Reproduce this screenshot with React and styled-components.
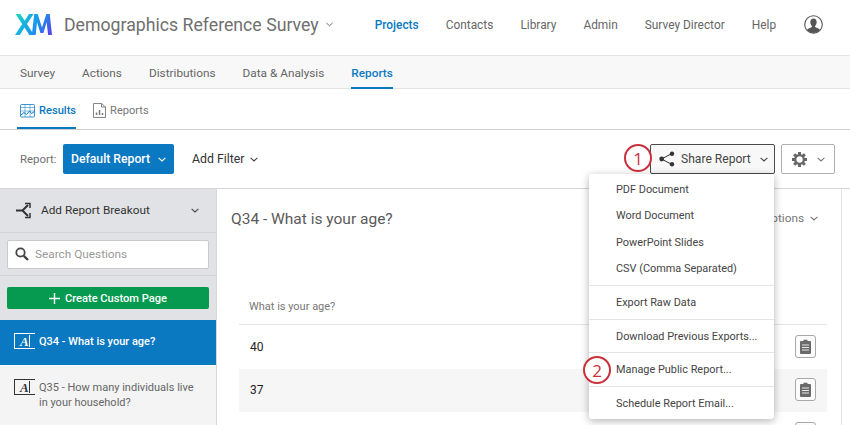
import React from "react";
import styled, { createGlobalStyle } from "styled-components";

const Global = createGlobalStyle`
  html, body { margin: 0; padding: 0; background: #fff; }
  * { box-sizing: border-box; }
  body { font-family: Roboto, "Liberation Sans", sans-serif; }
`;
const Page = styled.div`
  width: 850px; height: 425px; overflow: hidden; display: flex; flex-direction: column; color: #525252; position: relative;
`;
const Header = styled.header`
  height: 56px; flex: none; display: flex; align-items: center; padding: 0 0 6px 15px; border-bottom: 1px solid #e4e4e4;
`;
const Title = styled.div`
  margin-left: 12px; margin-right: 7px; font-size: 17.7px; color: #6f6f6f; white-space: nowrap;
`;
const Nav = styled.nav`
  display: flex; gap: 27px; margin-left: 42px; align-items: center; margin-top: 1px;
`;
const NavLink = styled.a`
  font-size: 11.9px; white-space: nowrap; color: ${p => (p.$active ? "#0b78c2" : "#666")}; font-weight: ${p => (p.$active ? 500 : 400)};
`;
const Caret = styled.svg`
  width: ${p => p.$w || 8}px; height: 5px; flex: none; fill: none; stroke: ${p => p.$c || "#666"}; stroke-width: 1.1;
`;
const SubNav = styled.div`
  height: 33px; flex: none; display: flex; gap: 27px; padding-left: 20px; background: #f8f8f8; border-bottom: 1px solid #e2e2e2;
`;
const SubLink = styled.a`
  font-size: 11.8px; line-height: 34px; height: 33px; white-space: nowrap; color: ${p => (p.$active ? "#0b78c2" : "#666")}; font-weight: ${p => (p.$active ? 500 : 400)};
  border-bottom: ${p => (p.$active ? "2px solid #0b78c2" : "none")};
`;
const Tabs = styled.div`
  height: 41px; flex: none; display: flex; padding-left: 17px; gap: 14px; border-bottom: 1px solid #cfcfcf;
`;
const Tab = styled.a`
  height: 40px; display: flex; align-items: center; gap: 4px; padding: 5px 0 0 3px; font-size: 11.1px; white-space: nowrap;
  color: ${p => (p.$active ? "#0b78c2" : "#777")}; font-weight: ${p => (p.$active ? 500 : 400)};
  border-bottom: 2px solid ${p => (p.$active ? "#0b78c2" : "transparent")};
`;
const Toolbar = styled.div`
  height: 59px; flex: none; display: flex; align-items: center; padding: 0 15px 0 20px; border-bottom: 1px solid #d4d4d4;
`;
const ReportLabel = styled.span`
  font-size: 11.4px; color: #707070; width: 43px;
`;
const PrimaryButton = styled.button`
  width: 111px; height: 30px; border: 0; border-radius: 2px; background: #0b78c2; color: #fff; font: inherit; font-size: 12.2px; font-weight: 500;
  display: flex; align-items: center; justify-content: center; gap: 8px; padding: 0;
`;
const FilterButton = styled.button`
  margin-left: 18px; border: 0; background: none; color: #333; font: inherit; font-size: 12.3px; display: flex; align-items: center; gap: 6px; padding: 0; white-space: nowrap;
`;
const Spacer = styled.div`flex: 1;`;
const ShareWrap = styled.div`position: relative;`;
const ShareButton = styled.button`
  width: 125px; height: 30px; border: 1px solid #4a4a4a; border-radius: 2px; background: #f8f8f8; color: #444; font: inherit; font-size: 12.1px;
  display: flex; align-items: center; gap: 6px; padding: 0 6px 0 8px; white-space: nowrap;
  svg:last-child { margin-left: auto; }
`;
const GearButton = styled.button`
  margin-left: 6px; width: 54px; height: 30px; border: 1px solid #b0b0b0; border-radius: 2px; background: #fff; color: #666;
  display: flex; align-items: center; justify-content: space-between; padding: 0 9px 0 10px;
`;
const Menu = styled.div`
  position: absolute; top: 30px; right: 1px; width: 185px; height: 245px; background: #fff; border-radius: 3px; z-index: 3;
  box-shadow: 0 2px 9px rgba(0,0,0,.3); display: flex; flex-direction: column; padding-top: 2px;
`;
const MenuGroup = styled.div`
  padding-bottom: ${p => p.$pb || 0}px; & + & { border-top: 1px solid #e4e4e4; }
`;
const MenuItem = styled.div`
  height: ${p => p.$h || 33}px; display: flex; align-items: center; padding-left: 27px; font-size: 10.9px; color: #444; white-space: nowrap;
`;
const Badge = styled.div`
  position: absolute; width: 28px; height: 28px; border-radius: 50%; border: 2.5px solid #c9303a; background: #fff; color: #c9303a; z-index: 4;
  display: flex; align-items: center; justify-content: center; font-size: 17px; font-family: "Open Sans", sans-serif;
`;
const ShareBadge = styled(Badge)` left: -26px; top: 0px; `;
const ManageBadge = styled(Badge)` left: -6px; top: 182px; `;
const Body = styled.div`flex: 1; display: flex; min-height: 0;`;
const Sidebar = styled.aside`
  width: 217px; flex: none; background: #e1e2e5; border-right: 1px solid #d8d8d8; display: flex; flex-direction: column;
`;
const Breakout = styled.div`
  height: 44px; flex: none; display: flex; align-items: center; padding: 0 17px 1px 16px; gap: 8px; border-bottom: 1px solid #d2d2d2; font-size: 11.8px; color: #333; white-space: nowrap;
  svg:last-child { margin-left: auto; }
`;
const SearchRow = styled.div`
  height: 43px; flex: none; padding: 7px 7px 0 7px; border-bottom: 1px solid #d2d2d2;
`;
const SearchBox = styled.div`
  height: 29px; background: #fff; border: 1px solid #c9c9c9; border-radius: 2px; display: flex; align-items: center; gap: 6px; padding: 0 0 1px 7px; font-size: 11.8px; color: #999; white-space: nowrap;
`;
const CreateRow = styled.div`height: 44px; flex: none; padding: 11px 7px 0 7px;`;
const CreateButton = styled.button`
  width: 202px; height: 22px; border: 0; border-radius: 2px; background: #059a4f; color: #fff; font: inherit; font-size: 11.1px; font-weight: 500;
  display: flex; align-items: center; justify-content: center; gap: 5px; padding: 0;
`;
const QuestionRow = styled.div`
  height: ${p => (p.$active ? 45 : 60)}px; flex: none; display: flex; gap: 4px; padding: 14px 14px 0;
  background: ${p => (p.$active ? "#0b78c2" : "#f4f4f4")}; color: ${p => (p.$active ? "#fff" : "#666")}; font-size: 11px; line-height: 15px; font-weight: ${p => (p.$active ? 500 : 400)};
  & + & { border-top: 1px solid #fff; }
`;
const TypeIcon = styled.span`
  flex: none; width: 21px; height: 16px; margin-top: -1px; border: 1px solid currentColor; border-right: 0; position: relative;
  font: italic bold 13px/15px "Liberation Serif", serif; padding-left: 5px; color: ${p => (p.$active ? "#fff" : "#333")};
  &::after { content: ""; position: absolute; right: 5px; top: 1px; bottom: 1px; width: 1px; background: currentColor; }
`;
const Main = styled.main`
  flex: 1; min-width: 0; display: flex; flex-direction: column; padding: 0 0 0 14px; position: relative;
`;
const MainInner = styled.div`
  width: 611px; height: 100%; border-right: 1px solid #e2e2e2; display: flex; flex-direction: column;
`;
const QHead = styled.div`
  height: 109px; flex: none; display: flex; justify-content: space-between; padding-top: 20px;
`;
const QTitle = styled.h2`
  margin: 0; font-size: 15.5px; line-height: 21px; font-weight: 400; color: #5a5a5a;
`;
const Options = styled.div`
  display: flex; align-items: center; gap: 6px; height: 18px; margin: 0 23px 0 0; font-size: 11.8px; color: #777;
`;
const Table = styled.div`margin-left: 8px; width: 588px; display: flex; flex-direction: column;`;
const TableHead = styled.div`
  height: 27px; padding: 2px 0 0 10px; font-size: 11px; color: #777; border-bottom: 1px solid #e4e4e4;
`;
const Row = styled.div`
  height: 43.5px; flex: none; display: flex; align-items: center; padding: 0 11px 0 11px; font-size: 12px; color: #222;
  background: ${p => (p.$alt ? "#f6f6f6" : "#fff")};
`;
const ClipButton = styled.button`
  margin: -1px 0 0 auto; width: 21px; height: 23px; border: 1px solid #a9a9a9; border-radius: 3px; background: #fbfbfb; padding: 0; display: flex; align-items: center; justify-content: center;
`;
const AvatarSlot = styled.div`margin-left: 28px; margin-top: -1px; display: flex;`;

const Chevron = ({ c, w }) => (
  <Caret viewBox="0 0 8 5" $c={c} $w={w}><path d="M.6.8 4 4 7.4.8" /></Caret>
);
const Logo = () => (
  <svg width="37" height="21" viewBox="0 0 37 21">
    <defs>
      <linearGradient id="xm" gradientUnits="userSpaceOnUse" x1="0" y1="0" x2="36" y2="21">
        <stop offset="0" stopColor="#1fdcae" />
        <stop offset=".3" stopColor="#16b4e0" />
        <stop offset=".62" stopColor="#1c8ff0" />
        <stop offset="1" stopColor="#5a3fe6" />
      </linearGradient>
    </defs>
    <path d="M.6 0h4.700l4.400 6.800L14 0h4.500l-6.500 10.100L19 21h-4.700l-4.800-7.500L4.800 21H0l7.200-10.900z" fill="url(#xm)" />
    <path d="M16.800 21 19.200 0h3.500L27 13.400 31.300 0h3.400L37 21h-3.900l-1.500-12.800L28.400 19h-3L22 8.200 20.700 21z" fill="url(#xm)" />
  </svg>
);
const Avatar = () => (
  <AvatarSlot>
    <svg width="19" height="19" viewBox="0 0 19 19">
      <circle cx="9.500" cy="9.500" r="8.800" fill="#fff" stroke="#555" strokeWidth="1.100" />
      <path d="M9.500 3.500c2 0 3.200 1.500 3.200 3.600 0 1.700-.8 3.100-1.600 3.800v1.200l3.700 1.600c.6.300 1 .6 1.200 1a8.200 8.200 0 0 1-13 0c.2-.4.600-.7 1.200-1l3.700-1.600v-1.200c-.8-.7-1.600-2.100-1.600-3.800 0-2.100 1.200-3.600 3.200-3.600z" fill="#555" />
    </svg>
  </AvatarSlot>
);
const ResultsIcon = () => (
  <svg width="15" height="14" viewBox="0 0 15 14" fill="none" stroke="#0b78c2" strokeWidth=".8">
    <rect x=".5" y=".5" width="14" height="12.500" rx="1" />
    <path d="M.5 3.500h14M5 .5v12.500M10 .5v12.500M.5 7h14" strokeWidth=".5" />
    <path d="M.5 11.500 4 8.500l2.500 2 3-3.500 2 2.500 3-2" strokeWidth="1" />
  </svg>
);
const ReportsIcon = () => (
  <svg width="13" height="15" viewBox="0 0 13 15" fill="none" stroke="#777" strokeWidth=".9">
    <path d="M.5.500h8l4 3.500v10.500H.5zM8.500.500V4h4" />
    <path d="M3.500 12V9.500M6.500 12V7M9.500 12v-2" strokeWidth="1.500" />
  </svg>
);
const ShareIcon = () => (
  <svg width="16" height="16" viewBox="0 0 16 16" fill="#333" stroke="#333">
    <path d="M2.500 8 13 2.500M2.500 8 13 13.500" strokeWidth="1" fill="none" />
    <circle cx="2.700" cy="8" r="2.400" stroke="none" />
    <circle cx="13" cy="2.700" r="2.200" stroke="none" />
    <circle cx="13" cy="13.300" r="2.200" stroke="none" />
  </svg>
);
const BreakoutIcon = () => (
  <svg width="17" height="17" viewBox="0 0 17 17" fill="none" stroke="#333" strokeWidth="2">
    <path d="M0 8.500h6.500L12 3M6.500 8.500 12 14" />
    <path d="M9 1.500h5v4.500M9 15.500h5V11" strokeWidth="1.500" />
  </svg>
);
const GearIcon = () => (
  <svg width="15" height="15" viewBox="0 0 15 15" fill="#666">
    <circle cx="7.500" cy="7.500" r="4.300" fill="none" stroke="#666" strokeWidth="2.200" />
    {[0, 45, 90, 135, 180, 225, 270, 315].map(a => (
      <rect key={a} x="6" y="0" width="3" height="3" transform={`rotate(${a} 7.500 7.500)`} />
    ))}
  </svg>
);
const SearchIcon = () => (
  <svg width="14" height="14" viewBox="0 0 14 14" fill="none" stroke="#444">
    <circle cx="5.500" cy="5.500" r="4.200" strokeWidth="1.800" />
    <path d="M8.800 8.800 13 13" strokeWidth="2.400" />
  </svg>
);
const ClipIcon = () => (
  <svg width="11" height="15" viewBox="0 0 11 15">
    <path d="M1 2h2.500V.800h4V2H10a1 1 0 0 1 1 1v11a1 1 0 0 1-1 1H1a1 1 0 0 1-1-1V3a1 1 0 0 1 1-1z" fill="#6a6a6a" />
    <path d="M2 6h7M2 8.500h7M2 11h7" stroke="#e8e8e8" strokeWidth="1" />
  </svg>
);
const PlusIcon = () => (
  <svg width="11" height="11" viewBox="0 0 11 11" stroke="#fff" strokeWidth="1.400"><path d="M5.500 0v11M0 5.500h11" /></svg>
);

const navItems = ["Contacts", "Library", "Admin", "Survey Director", "Help"];
const subItems = ["Survey", "Actions", "Distributions", "Data & Analysis"];
const menuGroups = [
  { h: 26.500, pb: 3, items: ["PDF Document", "Word Document", "PowerPoint Slides", "CSV (Comma Separated)"] },
  { h: 33, items: ["Export Raw Data"] },
  { h: 32, items: ["Download Previous Exports..."] },
  { h: 33, items: ["Manage Public Report..."] },
  { h: 33, items: ["Schedule Report Email..."] },
];

export default function App() {
  return (
    <Page>
      <Global />
      <Header>
        <Logo />
        <Title>Demographics Reference Survey</Title>
        <Chevron w={7} />
        <Nav>
          <NavLink $active>Projects</NavLink>
          {navItems.map(n => <NavLink key={n}>{n}</NavLink>)}
        </Nav>
        <Avatar />
      </Header>
      <SubNav>
        {subItems.map(s => <SubLink key={s}>{s}</SubLink>)}
        <SubLink $active>Reports</SubLink>
      </SubNav>
      <Tabs>
        <Tab $active><ResultsIcon />Results</Tab>
        <Tab><ReportsIcon />Reports</Tab>
      </Tabs>
      <Toolbar>
        <ReportLabel>Report:</ReportLabel>
        <PrimaryButton>Default Report <Chevron c="#fff" /></PrimaryButton>
        <FilterButton>Add Filter <Chevron c="#444" /></FilterButton>
        <Spacer />
        <ShareWrap>
          <ShareBadge>1</ShareBadge>
          <ShareButton><ShareIcon />Share Report<Chevron c="#444" /></ShareButton>
          <Menu>
            {menuGroups.map(g => (
              <MenuGroup key={g.items[0]} $pb={g.pb}>
                {g.items.map(i => <MenuItem key={i} $h={g.h}>{i}</MenuItem>)}
              </MenuGroup>
            ))}
            <ManageBadge>2</ManageBadge>
          </Menu>
        </ShareWrap>
        <GearButton><GearIcon /><Chevron c="#777" /></GearButton>
      </Toolbar>
      <Body>
        <Sidebar>
          <Breakout><BreakoutIcon />Add Report Breakout<Chevron c="#444" /></Breakout>
          <SearchRow><SearchBox><SearchIcon />Search Questions</SearchBox></SearchRow>
          <CreateRow><CreateButton><PlusIcon />Create Custom Page</CreateButton></CreateRow>
          <QuestionRow $active><TypeIcon $active>A</TypeIcon><span>Q34 - What is your age?</span></QuestionRow>
          <QuestionRow><TypeIcon>A</TypeIcon><span>Q35 - How many individuals live in your household?</span></QuestionRow>
        </Sidebar>
        <Main>
          <MainInner>
            <QHead>
              <QTitle>Q34 - What is your age?</QTitle>
              <Options>Options <Chevron c="#777" /></Options>
            </QHead>
            <Table>
              <TableHead>What is your age?</TableHead>
              <Row>40<ClipButton><ClipIcon /></ClipButton></Row>
              <Row $alt>37<ClipButton><ClipIcon /></ClipButton></Row>
              <Row><ClipButton><ClipIcon /></ClipButton></Row>
            </Table>
          </MainInner>
        </Main>
      </Body>
    </Page>
  );
}
